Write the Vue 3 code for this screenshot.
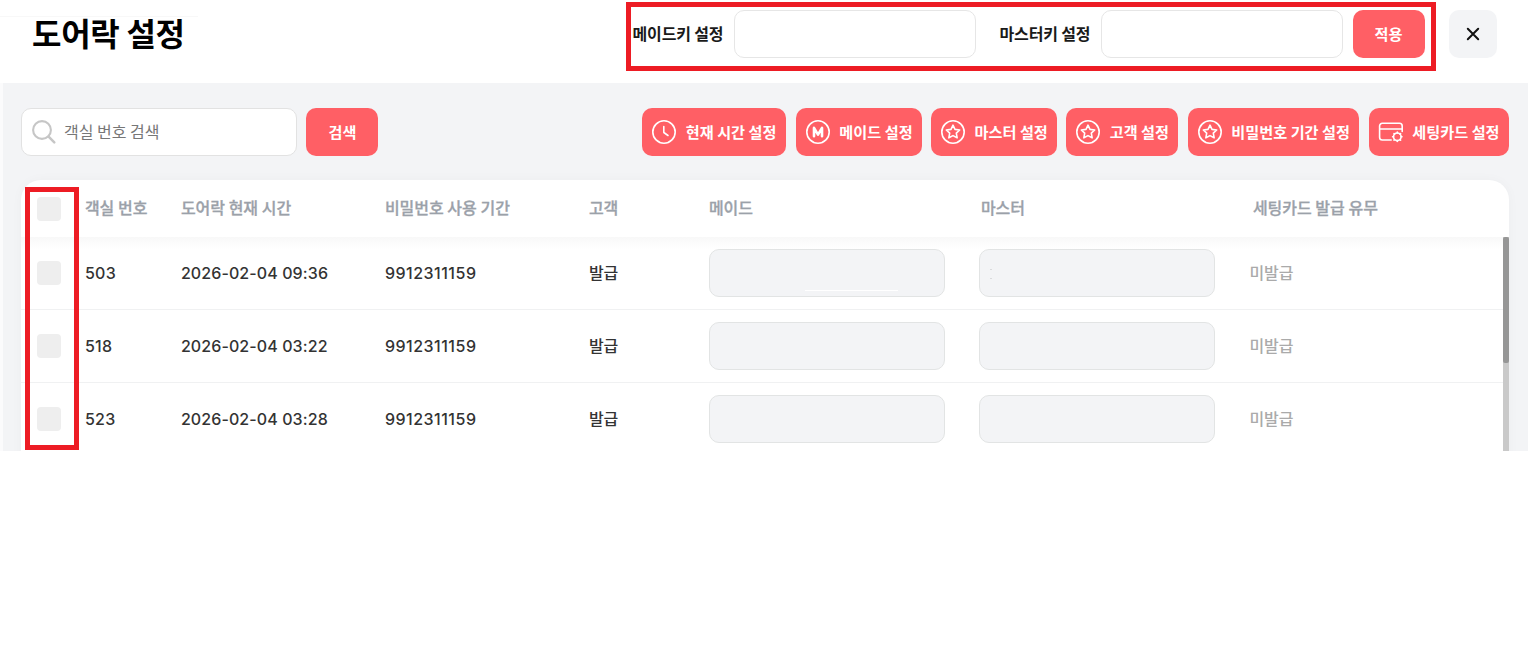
<script setup>
const star = 'M12 5.200l2 4.200 4.700.6-3.400 3.200.85 4.600L12 15.600l-4.150 2.200.85-4.600-3.400-3.200 4.700-.6z'
const actions = [
  { label: '현재 시간 설정', icon: 'clock', size: 'w144' },
  { label: '메이드 설정', icon: 'maid', size: 'w126' },
  { label: '마스터 설정', icon: 'star', size: 'w126' },
  { label: '고객 설정', icon: 'star', size: 'w112' },
  { label: '비밀번호 기간 설정', icon: 'star', size: 'w171' },
  { label: '세팅카드 설정', icon: 'card', size: 'w140' },
]
const rows = [
  { room: '503', time: '2026-02-04 09:36' },
  { room: '518', time: '2026-02-04 03:22' },
  { room: '523', time: '2026-02-04 03:28' },
]
</script>

<template>
  <div class="page">
    <header class="top">
      <h1>도어락 설정</h1>
      <div class="keys">
        <label class="maid-label">메이드키 설정</label>
        <div class="field"></div>
        <label class="master-label">마스터키 설정</label>
        <div class="field"></div>
        <button class="btn apply"><span>적용</span></button>
        <button class="close">
          <svg width="14" height="14" viewBox="0 0 14 14"><path d="M1.800 1.800l10.400 10.400M12.200 1.800L1.800 12.200" fill="none" stroke="#111" stroke-width="2" stroke-linecap="round" /></svg>
        </button>
      </div>
    </header>

    <main class="body">
      <div class="toolbar">
        <div class="search">
          <svg width="26" height="26" viewBox="0 0 26 26" fill="none" stroke="#c6c6c6" stroke-linecap="round"><circle cx="11" cy="11" r="8.900" stroke-width="2.100" /><path d="M17.600 17.600l5.700 5.700" stroke-width="2.500" /></svg>
          <span>객실 번호 검색</span>
        </div>
        <button class="btn find"><span>검색</span></button>
        <div class="actions">
          <button v-for="a in actions" :key="a.label" class="btn action" :class="a.size">
            <svg width="26" height="26" viewBox="-1 -1 26 26" fill="none" stroke="#fff" stroke-width="1.600" stroke-linecap="round" stroke-linejoin="round">
              <template v-if="a.icon === 'card'">
                <path d="M12.200 20H3.300A2.700 2.700 0 0 1 .6 17.300V6a2.700 2.700 0 0 1 2.700-2.700h17.200A2.700 2.700 0 0 1 23.200 6v5.500M.6 9h22.600" />
                <circle cx="18.300" cy="16.800" r="3.800" />
                <path d="M18.300 13v-.9M18.300 21.500v-.9M14.500 16.800h-.9M23 16.800h-.9M15.600 14.100l-.6-.6M21.600 20.100l-.6-.6M15.600 19.500l-.6.6M21.600 13.500l-.6.6" />
              </template>
              <circle v-else cx="12" cy="12" r="11.200" />
              <path v-if="a.icon === 'clock'" d="M11.800 6.500v6l4.200 3" />
              <path v-if="a.icon === 'maid'" d="M8 16.200V7.900l4 6.700 4-6.700v8.300" stroke-width="2.600" />
              <path v-if="a.icon === 'star'" :d="star" />
            </svg>
            <span>{{ a.label }}</span>
          </button>
        </div>
      </div>

      <section class="card">
        <div class="thead">
          <i class="check"></i>
          <span>객실 번호</span>
          <span>도어락 현재 시간</span>
          <span>비밀번호 사용 기간</span>
          <span>고객</span>
          <span>메이드</span>
          <span>마스터</span>
          <span>세팅카드 발급 유무</span>
        </div>
        <div class="scroll">
          <div class="tbody">
            <div v-for="(r, i) in rows" :key="r.room" class="row">
              <i class="check"></i>
              <span class="num">{{ r.room }}</span>
              <span class="num time">{{ r.time }}</span>
              <span class="num period">9912311159</span>
              <span class="issued">발급</span>
              <div class="cell"><i v-if="i === 0" class="streak"></i></div>
              <div class="cell"><i v-if="i === 0" class="dots"></i></div>
              <span class="none">미발급</span>
            </div>
          </div>
          <div class="track"><div class="thumb"></div></div>
        </div>
      </section>
    </main>

    <div class="mark mark-keys"></div>
    <div class="mark mark-checks"></div>
    <div class="hairline"></div>
  </div>
</template>

<style>
body { background: #fff; }
</style>

<style scoped>
.page, .page * { box-sizing: border-box; }
.page {
  position: relative;
  width: 1528px;
  height: 648px;
  overflow: hidden;
  background: #fff;
  font-family: "Noto Sans CJK KR", sans-serif;
  font-size: 16px;
  line-height: 24px;
  color: #333;
}
button { font: inherit; border: 0; padding: 0; margin: 0; }
.top {
  display: flex;
  justify-content: space-between;
  height: 83px;
  padding: 10px 31.500px 0 32px;
}
h1 { margin: -2px 0 0; font-size: 32px; line-height: 48px; font-weight: 700; color: #000; letter-spacing: -0.3px; }
.keys { display: flex; height: 48px; align-items: center; font-weight: 700; color: #1a1a1a; white-space: nowrap; letter-spacing: -0.15px; }
.maid-label, .master-label { width: 91px; margin-right: 10px; padding-bottom: 3px; }
.master-label { margin-left: 24px; }
.field { width: 242px; height: 48px; border: 1px solid #e6e6e6; border-radius: 10px; background: #fff; }
.btn {
  display: flex;
  align-items: center;
  justify-content: center;
  height: 48px;
  border-radius: 10px;
  background: #ff5f65;
  color: #fff;
  font-weight: 700;
  font-size: 15.200px;
  letter-spacing: 0;
  white-space: nowrap;
}
.btn span { padding-bottom: 2px; }
.apply { width: 72px; margin-left: 10px; }
.close {
  display: flex; align-items: center; justify-content: center;
  width: 48px; height: 48px; margin-left: 24px;
  border-radius: 10px; background: #f3f4f6;
}
.body {
  height: 368px;
  margin-left: 3px;
  padding: 25px 19px 0 18px;
  background: #f3f4f6;
  box-shadow: -3px 0 0 #fbfbfc;
  overflow: hidden;
}
.toolbar { display: flex; height: 48px; }
.search {
  display: flex; align-items: center; width: 276px;
  padding-left: 8.500px;
  border: 1px solid #e2e2e2; border-radius: 10px; background: #fff;
  color: #777;
}
.search span { margin-left: 7.500px; padding-bottom: 3px; }
.find { width: 72px; margin-left: 9.400px; }
.actions { display: flex; gap: 9.600px; margin-left: auto; }
.action { justify-content: flex-start; padding-left: 8.500px; }
.action span { margin-left: 8.800px; }
.w144 { width: 144px; }
.w126 { width: 125.600px; }
.w112 { width: 112px; }
.w171 { width: 171.400px; }
.w140 { width: 140px; }
.card {
  height: 300px;
  margin-top: 24px;
  border-radius: 20px 20px 0 0;
  background: #fff;
  overflow: hidden;
  box-shadow: 0 0 12px rgba(0, 0, 0, .03);
}
.thead, .row { display: grid; align-items: center; padding-left: 16.400px; }
.thead {
  grid-template-columns: 47.500px 96px 204px 204px 120px 272px 272px 1fr;
  height: 57.400px;
  color: #9ba1a9;
  font-weight: 500;
  -webkit-text-stroke: .3px #9ba1a9;
}
.thead span { padding-bottom: 3px; }
.check { display: block; width: 24px; height: 24px; border-radius: 4px; background: #eee; }
.scroll { display: flex; height: 242px; }
.tbody { flex: 1; background: linear-gradient(#f8f8f8, #fff 12px); }
.row {
  grid-template-columns: 47.500px 96px 204px 204px 120px 269.700px 270.800px 1fr;
  height: 72.800px;
  border-bottom: 1px solid #f0f1f2;
  font-weight: 500;
}
.num { font-family: Inter, sans-serif; font-size: 16px; font-weight: 500; letter-spacing: .3px; }
.time { letter-spacing: .1px; }
.period { letter-spacing: .5px; }
.issued, .none { padding-bottom: 2px; }
.cell {
  width: 236.500px; height: 48px;
  border: 1px solid #e2e4e4; border-radius: 10px; background: #f3f4f6;
  position: relative;
}
.streak { position: absolute; left: 95px; bottom: 5px; width: 93px; height: 1px; background: #fff; }
.dots { position: absolute; left: 10px; top: 19px; width: 2px; height: 10px; border: solid #dadbdd; border-width: 1px 0; }
.none { color: #aaa; }
.track { width: 6px; background: #c9c9c9; }
.thumb { height: 126px; border-radius: 2px; background: #969696; }
.mark { position: absolute; border: 5px solid #ed1c24; }
.mark-keys { left: 626px; top: 2px; width: 810px; height: 69px; }
.mark-checks { left: 25px; top: 187px; width: 54px; height: 263px; }
.hairline { position: absolute; left: 0; top: 16px; width: 198px; height: 1px; background: #f8f8f8; }
</style>
